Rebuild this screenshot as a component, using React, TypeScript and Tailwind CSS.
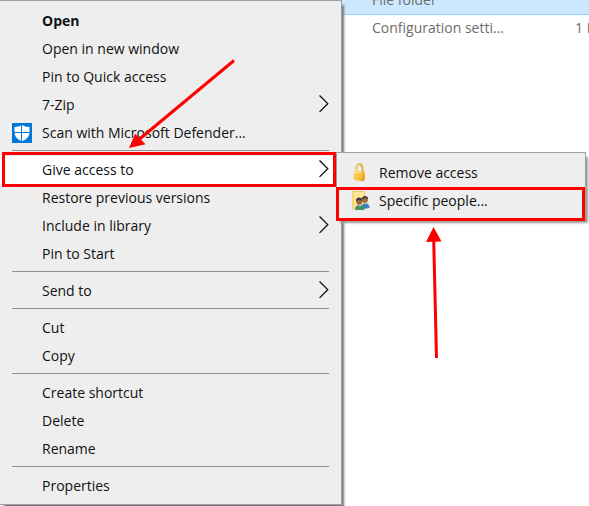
import React from 'react';

interface MenuItem {
  label: string;
  bold?: boolean;
  submenu?: boolean;
  active?: boolean;
  icon?: React.ReactNode;
}

const ShieldIcon = () => (
  <svg width="20" height="20" viewBox="0 0 20 20" aria-hidden="true">
    <rect width="20" height="20" fill="#0078d7" />
    <path d="M10 2c2 1.300 4.500 1.900 7.500 1.900V9c0 4.500-3 7.600-7.500 9.300C5.500 16.600 2.500 13.500 2.500 9V3.900c3 0 5.500-.6 7.500-1.900z" fill="#fff" />
    <path d="M9.500 2v17M2 9.500h16" stroke="#0078d7" strokeWidth="1" />
  </svg>
);

const LockIcon = () => (
  <svg width="20" height="20" viewBox="0 0 20 20" aria-hidden="true">
    <defs>
      <linearGradient id="lock-body" x1="0" y1="0" x2="1" y2="1">
        <stop offset="0" stopColor="#ffe9a0" />
        <stop offset="0.500" stopColor="#fcc94b" />
        <stop offset="1" stopColor="#eb9a1c" />
      </linearGradient>
    </defs>
    <path d="M5.500 10V4.500C5.500 2.300 6.500 1.200 8.200 1.200s3 1.300 3.200 3.500V9.500" fill="none" stroke="#e3b04a" strokeWidth="2" />
    <path d="M5.200 9V4.500C5.200 2.500 6.300 1.200 8 1.200" fill="none" stroke="#fbdf92" strokeWidth="1" />
    <path d="M2.500 9 12.500 7.800l1.500 1v7.700l-2 1.700-8.300-.9-1.200-1z" fill="url(#lock-body)" />
    <path d="M3 11.500l9 .5M3 14.200l9 .5" stroke="#f3b02f" strokeWidth="0.700" />
    <path d="M12.300 8.500v9.300" stroke="#e3941d" strokeWidth="0.800" />
  </svg>
);

const SharedFolderIcon = () => (
  <svg width="20" height="20" viewBox="0 0 20 20" aria-hidden="true">
    <path d="M1.500.5h12v17.500h-12z" fill="#fde795" stroke="#ecc85c" />
    <path d="M1 .5h2V18H1z" fill="#f6d774" />
    <path d="M10 17.500c0-3.300 1.500-5 4.500-5s4 1.700 4 4.300c-2 .8-5.500 1.200-8.500.7z" fill="#3f7fc0" />
    <circle cx="14" cy="9" r="2.900" fill="#a4703f" />
    <path d="M10.900 8.500c-.1-2.300 1.200-3.400 3.200-3.400s3.400 1.300 3 3.600c-1-1.400-4-1.600-6.200-.2z" fill="#4a4440" />
    <path d="M4 18.500c0-3 1.500-4.600 4.500-4.600s5 1.600 5 4.600c-2.500.8-7 .8-9.500 0z" fill="#3c9468" />
    <path d="M7.500 13.800l1.300 2 1.200-2z" fill="#d9e8ee" />
    <circle cx="8.300" cy="10.700" r="3" fill="#9a6638" />
    <path d="M5 10.200c-.3-2.400 1-3.800 3.200-3.800s3.600 1.400 3.200 3.700c-1.200-1.500-4.200-1.700-6.400.1z" fill="#3d3a38" />
  </svg>
);

const Chevron = () => (
  <svg width="10" height="20" viewBox="0 0 10 20" fill="none" aria-hidden="true">
    <path d="M1.300.500 9.500 8.700l-8.200 8.200" stroke="#86bdea" strokeWidth="1" />
    <path d="M.5.500 8.700 8.700.5 16.900" stroke="#1a0a14" strokeWidth="1.200" />
  </svg>
);

const groups: MenuItem[][] = [
  [
    { label: 'Open', bold: true },
    { label: 'Open in new window' },
    { label: 'Pin to Quick access' },
    { label: '7-Zip', submenu: true },
    { label: 'Scan with Microsoft Defender...', icon: <ShieldIcon /> },
  ],
  [
    { label: 'Give access to', submenu: true, active: true },
    { label: 'Restore previous versions' },
    { label: 'Include in library', submenu: true },
    { label: 'Pin to Start' },
  ],
  [{ label: 'Send to', submenu: true }],
  [{ label: 'Cut' }, { label: 'Copy' }],
  [{ label: 'Create shortcut' }, { label: 'Delete' }, { label: 'Rename' }],
  [{ label: 'Properties' }],
];

const accessItems: MenuItem[] = [
  { label: 'Remove access', icon: <LockIcon /> },
  { label: 'Specific people...', icon: <SharedFolderIcon />, active: true },
];

const files = [
  { type: 'File folder', size: '', selected: true },
  { type: 'Configuration setti...', size: '1 KB', selected: false },
];

// The list is scrolled half a row down, under the menus
const FileList = () => (
  <table className="-mt-[13px] w-full table-fixed border-collapse text-[#6d6d6d]">
    <tbody>
      {files.map((file) => (
        <tr key={file.type} className={file.selected ? 'h-[27px] border-b border-[#99d1ff] bg-[#cce8ff]' : 'h-7'}>
          <td className="w-[372px]" />
          <td className="whitespace-nowrap">{file.type}</td>
          <td className="w-[14px] whitespace-nowrap">{file.size}</td>
        </tr>
      ))}
    </tbody>
  </table>
);

const MenuRow: React.FC<{ item: MenuItem }> = ({ item }) => (
  <button
    type="button"
    role="menuitem"
    aria-haspopup={item.submenu ? 'menu' : undefined}
    className={`relative flex h-7 w-full items-center px-3 text-left whitespace-nowrap ${item.active ? 'bg-white' : ''}`}
  >
    <span className="flex w-[30px] shrink-0 items-center">{item.icon}</span>
    <span className={item.bold ? 'grow font-bold' : 'grow'}>{item.label}</span>
    {item.submenu && <Chevron />}
    {item.active && (
      <span className="absolute -top-1 right-[5px] -bottom-[3px] left-[2px] border-3 border-[#ff0000]" />
    )}
  </button>
);

const ContextMenu = () => (
  <div
    role="menu"
    className="absolute top-0 left-0 w-[342px] border-t border-r border-b border-[#a0a0a0] bg-[#eeeeee] pt-[6px] pb-1 shadow-[3px_4px_2px_-1px_#777777]"
  >
    {groups.map((group, i) => (
      <React.Fragment key={i}>
        {i > 0 && <hr className="mx-3 mt-[3px] mb-[5px] border-[#919191]" />}
        {group.map((item) => (
          <MenuRow key={item.label} item={item} />
        ))}
      </React.Fragment>
    ))}
  </div>
);

const AccessMenu = () => (
  <div
    role="menu"
    className="absolute top-[152px] left-[336px] w-[250px] border border-[#a0a0a0] bg-[#eeeeee] pt-[6px] pb-1 shadow-[3px_4px_2px_-1px_#999999]"
  >
    {accessItems.map((item) => (
      <button
        key={item.label}
        type="button"
        role="menuitem"
        className="relative flex h-7 w-full items-center pl-[14px] text-left whitespace-nowrap"
      >
        <span className="w-7 shrink-0">{item.icon}</span>
        {item.label}
        {item.active && <span className="absolute top-0 right-0 -bottom-[6px] -left-px border-3 border-[#ff0000]" />}
      </button>
    ))}
  </div>
);

const Arrows = () => (
  <svg className="pointer-events-none absolute top-0 left-0" width="589" height="506" viewBox="0 0 589 506" fill="#ff0000" aria-hidden="true">
    <path d="M234 60.500 139 139.500" stroke="#ff0000" strokeWidth="3" />
    <path d="M129 148 135.200 133.700 145.500 144.300z" />
    <path d="M436.500 358 433.700 240" stroke="#ff0000" strokeWidth="3" />
    <path d="M433.500 227 426 242 441.500 241.500z" />
  </svg>
);

export default function App() {
  return (
    <div className="relative min-h-screen overflow-hidden bg-white font-['Open_Sans','Noto_Sans',sans-serif] text-sm text-[#111111]">
      <FileList />
      <ContextMenu />
      <AccessMenu />
      <Arrows />
    </div>
  );
}
